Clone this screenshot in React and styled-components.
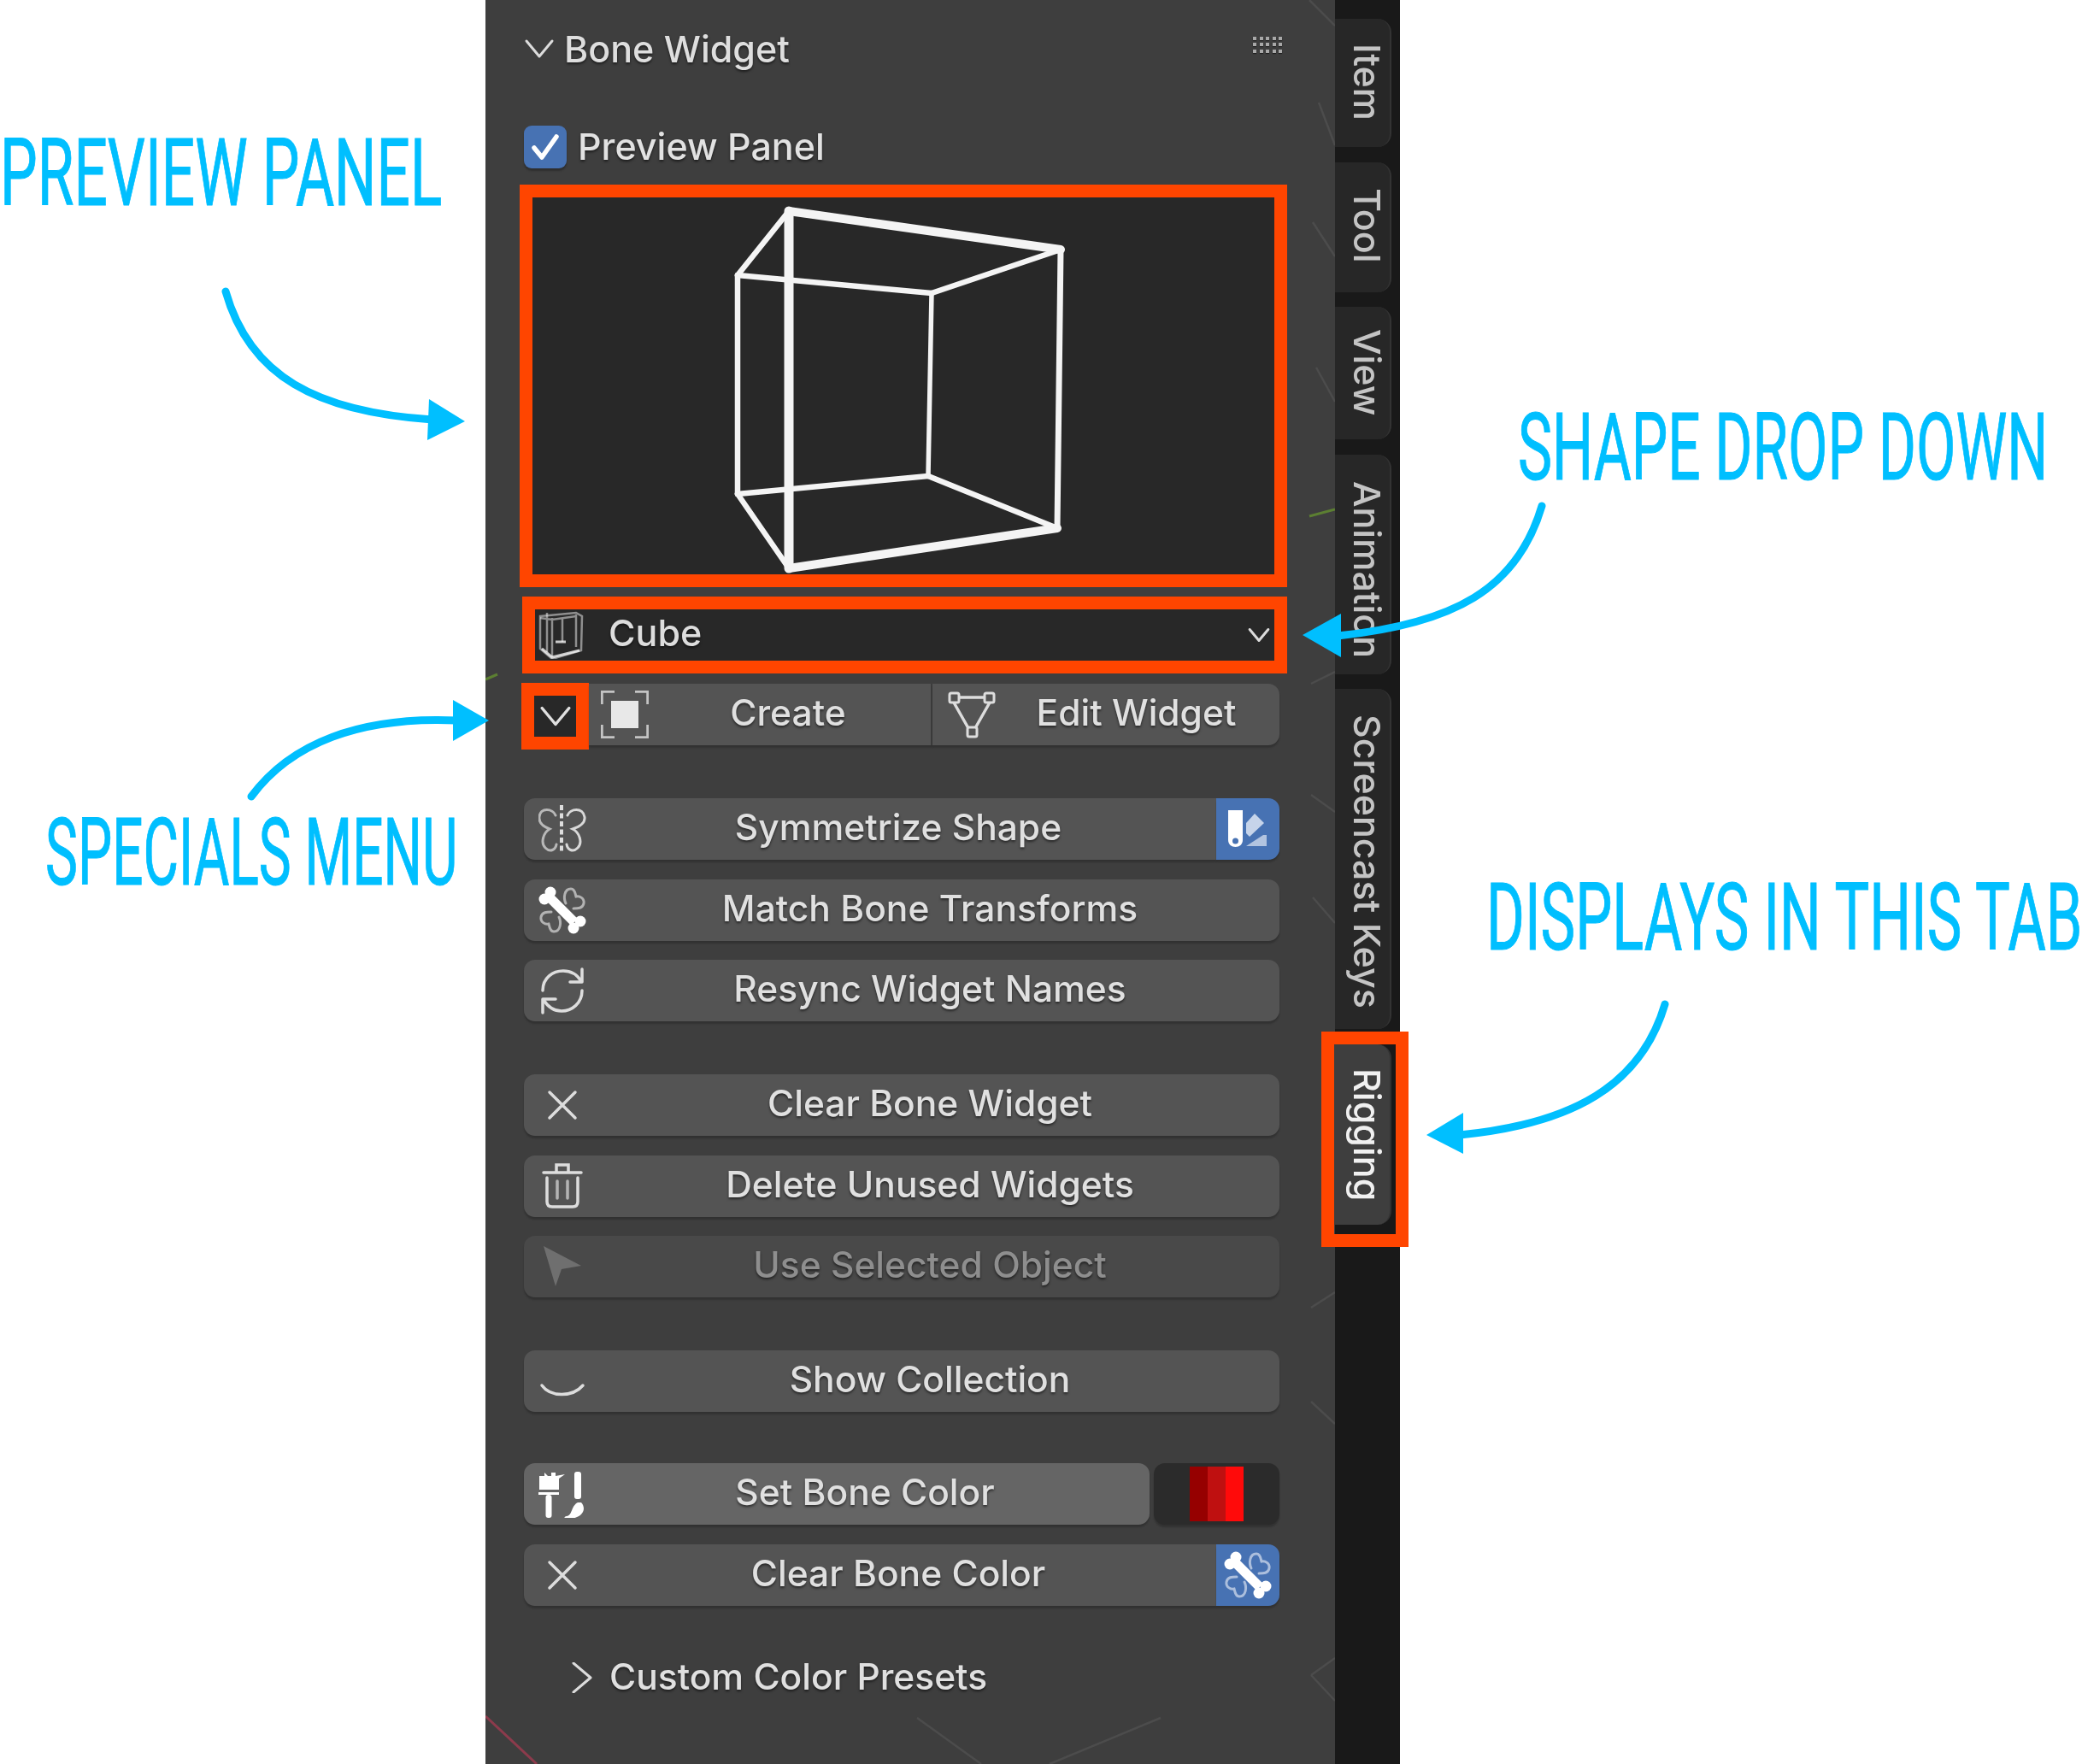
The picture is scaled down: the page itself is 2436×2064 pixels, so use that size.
import styled, { createGlobalStyle } from "styled-components";

const GlobalStyle = createGlobalStyle`
  html, body {
    margin: 0;
    padding: 0;
    background: #ffffff;
  }
`;

const Styled = {
  Page: styled.div`
    position: relative;
    width: 2436px;
    height: 2064px;
    overflow: hidden;
    background: #ffffff;
    font-family: "Inter", "Liberation Sans", sans-serif;
  `,

  Panel: styled.div`
    display: flex;
    margin-left: 568px;
    width: 1070px;
    height: 2064px;
    filter: blur(0.6px);
  `,

  Content: styled.div`
    position: relative;
    box-sizing: border-box;
    width: 994px;
    height: 100%;
    padding-left: 45px;
    background: #3e3e3e;
  `,

  Column: styled.div`
    position: relative;
    display: flex;
    flex-direction: column;
    width: 884px;
  `,

  Header: styled.div`
    display: flex;
    align-items: center;
    height: 114px;
    font-size: 43px;
    font-weight: 500;
    color: #dedede;
    text-shadow: 0 2px 3px rgba(0, 0, 0, 0.55);

    svg {
      margin-right: 11px;
    }

    span {
      flex: 1;
    }
  `,

  Grip: styled.div`
    display: grid;
    grid-template-columns: repeat(5, 4px);
    gap: 3.5px;
    margin: 0 -3px 10px 0;

    i {
      width: 4px;
      height: 4px;
      background: #a8a8a8;
      box-shadow: 0 1px 1px #1c1c1c;
    }
  `,

  CheckRow: styled.div`
    display: flex;
    align-items: center;
    gap: 13px;
    margin-top: 33px;
    height: 50px;
    font-size: 43px;
    font-weight: 500;
    color: #e2e2e2;
    text-shadow: 0 2px 3px rgba(0, 0, 0, 0.55);

    span {
      margin-top: -3px;
    }
  `,

  CheckBox: styled.div`
    display: flex;
    align-items: center;
    justify-content: center;
    width: 50px;
    height: 50px;
    border-radius: 9px;
    background: #4772b3;
    box-shadow: 0 3px 2px rgba(0, 0, 0, 0.25);
  `,

  Preview: styled.div`
    box-sizing: border-box;
    margin: 19px -9px 0 -5px;
    height: 471px;
    border: 15px solid #ff4500;
    background: #282828;

    svg {
      display: block;
    }
  `,

  Dropdown: styled.div`
    display: flex;
    align-items: center;
    box-sizing: border-box;
    margin: 11px -9px 0 -2px;
    height: 90px;
    padding-left: 2px;
    border: 15px solid #ff4500;
    background: #282828;
    font-size: 43px;
    font-weight: 500;
    color: #dddddd;
    text-shadow: 0 2px 3px rgba(0, 0, 0, 0.55);

    span {
      flex: 1;
      margin: -7px 0 0 28px;
    }

    svg:last-child {
      margin-right: 5px;
    }
  `,

  ActionRow: styled.div`
    display: flex;
    margin-top: 12px;
    height: 72px;
  `,

  SpecialsBox: styled.div`
    display: flex;
    flex: none;
    align-items: center;
    justify-content: center;
    box-sizing: border-box;
    margin: -1px 0 -5px -3px;
    width: 79px;
    height: 78px;
    border: 15px solid #ff4500;
    background: #282828;
  `,

  Group: styled.div`
    display: grid;
    gap: 22.7px;
    margin-top: ${({ $top }) => $top}px;
  `,

  SplitRow: styled.div`
    display: flex;
    gap: ${({ $gap }) => $gap || 0}px;
    height: 72px;
  `,

  Button: styled.div`
    display: flex;
    flex: ${({ $width }) => ($width ? `0 0 ${$width}px` : 1)};
    align-items: center;
    box-sizing: border-box;
    height: 72px;
    padding-left: ${({ $pad }) => $pad ?? 17}px;
    border-radius: ${({ $radius }) => $radius || "13px"};
    border-right: ${({ $divider }) => ($divider ? "2px solid #3c3c3c" : "none")};
    background: ${({ $tone }) =>
      $tone === "light" ? "#656565" : $tone === "off" ? "#494949" : "#545454"};
    box-shadow: 0 3px 2px rgba(0, 0, 0, 0.2);
    font-size: 42.5px;
    font-weight: 500;
    color: ${({ $tone }) => ($tone === "off" ? "#8e8e8e" : "#e0e0e0")};
    text-shadow: 0 2px 3px rgba(0, 0, 0, 0.55);

    svg {
      flex: none;
    }
  `,

  Label: styled.span`
    flex: 1;
    margin: -5px 0 0 ${({ $shift }) => $shift ?? -7}px;
    text-align: center;
    white-space: nowrap;
  `,

  IconCap: styled.div`
    display: flex;
    flex: none;
    align-items: center;
    justify-content: center;
    width: 74px;
    height: 72px;
    border-radius: 0 13px 13px 0;
    background: #4772b3;
    box-shadow: 0 3px 2px rgba(0, 0, 0, 0.2);
  `,

  Swatch: styled.div`
    display: flex;
    flex: 1;
    justify-content: center;
    align-items: center;
    height: 72px;
    border-radius: 13px;
    background: #2b2b2b;
    box-shadow: 0 3px 2px rgba(0, 0, 0, 0.2);
  `,

  Stripe: styled.div`
    width: 21px;
    height: 64px;
    background: ${({ $color }) => $color};
  `,

  Presets: styled.div`
    display: flex;
    align-items: center;
    gap: 14px;
    margin: 60px 0 0 50px;
    height: 48px;
    font-size: 42.5px;
    font-weight: 500;
    color: #e0e0e0;
    text-shadow: 0 2px 3px rgba(0, 0, 0, 0.55);

    span {
      margin-top: -3px;
    }
  `,

  Streaks: styled.svg`
    position: absolute;
    left: 0;
    top: 0;
  `,

  TabBar: styled.div`
    position: relative;
    display: flex;
    flex: 1;
    flex-direction: column;
    gap: 17.5px;
    box-sizing: border-box;
    padding-top: 22px;
    background: #191919;
  `,

  Tab: styled.div`
    box-sizing: border-box;
    flex: none;
    width: 66px;
    height: ${({ $height }) => $height}px;
    padding-top: ${({ $pad }) => $pad}px;
    border-radius: 0 16px 16px 0;
    border-right: 2px solid #333333;
    background: ${({ $active }) => ($active ? "#3e3e3e" : "#272727")};
    color: ${({ $active }) => ($active ? "#f0f0f0" : "#c4c4c4")};
    font-size: 43px;
    font-weight: 500;
    line-height: 52px;
    white-space: nowrap;
    writing-mode: vertical-rl;
  `,

  TabMark: styled.div`
    position: absolute;
    left: -16px;
    top: 1207px;
    box-sizing: border-box;
    width: 102px;
    height: 252px;
    border: 15px solid #ff4500;
  `,

  Callout: styled.div`
    position: absolute;
    left: ${({ $x }) => $x}px;
    top: ${({ $y }) => $y}px;
    font-family: "Roboto", "Liberation Sans", sans-serif;
    font-size: 110px;
    font-weight: 400;
    line-height: 110px;
    white-space: nowrap;
    color: #00bfff;
    -webkit-text-stroke: 1px #00bfff;
    transform: scaleX(${({ $squeeze }) => $squeeze});
    transform-origin: left top;
  `,

  ArrowLayer: styled.svg`
    position: absolute;
    left: 0;
    top: 0;
    pointer-events: none;
  `,
};

const INK = "#dcdcdc";

function Chevron({ dir = "down", size = 36, color = INK, weight = 3 }) {
  const d = dir === "down" ? "M3 9 L18 27 L33 9" : "M8 1 L28 18 L8 35";
  return (
    <svg width={size} height={size} viewBox="0 0 36 36">
      <path d={d} fill="none" stroke={color} strokeWidth={weight * (36 / size)} strokeLinecap="round" strokeLinejoin="round" />
    </svg>
  );
}

function Icon({ children }) {
  return (
    <svg width="56" height="56" viewBox="0 0 56 56" fill="none">
      {children}
    </svg>
  );
}

const BoneIcon = () => (
  <Icon>
    <path d="M12 12 L42 42" stroke="#ffffff" strokeWidth="11" />
    <circle cx="14" cy="7" r="6.5" fill="#ffffff" />
    <circle cx="7" cy="15" r="6.5" fill="#ffffff" />
    <circle cx="41" cy="49" r="6.5" fill="#ffffff" />
    <circle cx="49" cy="41" r="6.5" fill="#ffffff" />
    <path
      d="M32 20 C29 14 30 3 38 3 C43 3 43 9 44 12 C48 11 54 14 53 20 C52 26 46 26 41 26"
      stroke="#ffffff"
      strokeOpacity="0.55"
      strokeWidth="3"
      strokeLinecap="round"
    />
    <path
      d="M24 36 C27 42 26 53 18 53 C13 53 13 47 12 44 C8 45 2 42 3 36 C4 30 10 30 15 30"
      stroke="#ffffff"
      strokeOpacity="0.55"
      strokeWidth="3"
      strokeLinecap="round"
    />
  </Icon>
);

const CubeMini = () => (
  <Icon>
    <g stroke="#e4e4e4" strokeOpacity="0.55" strokeWidth="2.5">
      <path d="M4 6 L46 2 L53 6 L52 46 L18 56 L4 44 Z" />
      <path d="M12 2 L12 48 M18 8 L18 54 M30 8 L30 36 M46 4 L46 42 M4 8 L18 10 L46 6" />
    </g>
    <path d="M6 44 L18 54 L50 46 M22 36 L34 36" stroke="#ffffff" strokeOpacity="0.75" strokeWidth="3" />
  </Icon>
);

const CreateIcon = () => (
  <Icon>
    <rect x="12" y="12" width="32" height="32" fill="#e8e8e8" />
    <path
      d="M1 16 L1 1 L16 1 M40 1 L55 1 L55 16 M1 40 L1 55 L16 55 M55 40 L55 55 L40 55"
      stroke="#c4c4c4"
      strokeWidth="3.5"
    />
  </Icon>
);

const EditIcon = () => (
  <Icon>
    <path d="M13 8 L43 8 M7 14 L24 44 M49 14 L32 44" stroke="#dddddd" strokeWidth="3.5" />
    <rect x="2" y="3" width="11" height="11" rx="2" stroke="#dddddd" strokeWidth="3" />
    <rect x="43" y="3" width="11" height="11" rx="2" stroke="#dddddd" strokeWidth="3" />
    <rect x="23" y="43" width="11" height="11" rx="2" stroke="#dddddd" strokeWidth="3" />
  </Icon>
);

const ButterflyIcon = () => (
  <Icon>
    <path d="M27 0 L27 56" stroke="#dddddd" strokeWidth="4" strokeDasharray="6 3.5" />
    <path
      d="M34 12 C37 4 52 2 54 14 C55 22 46 26 40 28 C48 32 52 44 46 50 C40 56 34 52 33 46"
      stroke="#d8d8d8"
      strokeWidth="3"
      strokeLinecap="round"
    />
    <path
      d="M20 12 C17 4 2 2 1 14 C0 22 8 26 13 28 C6 32 2 44 8 50 C14 56 20 52 21 46"
      stroke="#b8b8b8"
      strokeWidth="3"
      strokeLinecap="round"
    />
  </Icon>
);

const RefreshIcon = () => (
  <Icon>
    <g stroke="#dddddd" strokeWidth="3.5" strokeLinecap="round" strokeLinejoin="round">
      <path d="M5 28 C5 13 17 5 29 5 C38 5 45 9 50 17" />
      <path d="M51 3 L51 18 L37 18" />
      <path d="M51 28 C51 43 39 52 27 52 C18 52 11 47 6 39" />
      <path d="M5 54 L5 38 L20 38" />
    </g>
  </Icon>
);

const CrossIcon = () => (
  <Icon>
    <path d="M13 13 L43 43 M43 13 L13 43" stroke="#dddddd" strokeWidth="3.5" strokeLinecap="round" />
  </Icon>
);

const TrashIcon = () => (
  <Icon>
    <g stroke="#dddddd" strokeWidth="3.5" strokeLinecap="round">
      <path d="M6 12 L50 12 M21 11 L21 3 L35 3 L35 11" />
      <path d="M10 18 L10 46 C10 50 12 52 16 52 L40 52 C44 52 46 50 46 46 L46 18" />
      <path d="M22 22 L22 42 M34 22 L34 42" strokeOpacity="0.7" />
    </g>
  </Icon>
);

const CursorIcon = () => (
  <Icon>
    <path d="M6 4 L50 27 L27 31 L20 51 Z" fill="#6f6f6f" />
  </Icon>
);

const ArcIcon = () => (
  <Icon>
    <path d="M4 33 C14 47 40 47 52 33" stroke="#dddddd" strokeWidth="3.5" strokeLinecap="round" />
  </Icon>
);

const BrushIcon = () => (
  <Icon>
    <path
      d="M1 7 L7 7 L7 3 L11 7 L15 7 L15 3 L20 3 L20 7 L31 5 L24 10 L24 23 L1 23 Z"
      fill="#ffffff"
    />
    <rect x="0" y="26" width="24" height="3" fill="#ffffff" />
    <rect x="8.5" y="29" width="7" height="27" rx="3" fill="#ffffff" />
    <rect x="42" y="2" width="8" height="32" rx="3" fill="#ffffff" />
    <path d="M50 38 C56 44 54 57 34 57 C30 57 29 55 33 54 C40 53 38 42 46 38 Z" fill="#ffffff" />
  </Icon>
);

const PaletteIcon = () => (
  <Icon>
    <path d="M5 6 L22 6 L22 41 C22 46 18 49 13.5 49 C9 49 5 46 5 41 Z" fill="#ffffff" />
    <circle cx="13.5" cy="42" r="3.5" fill="#4772b3" />
    <path d="M26 21 L36 10 L47 21 L30 37 L26 33 Z" fill="#c6d4ea" />
    <path d="M26 48 L46 35 L50 35 L50 48 Z" fill="#b2c4e0" />
  </Icon>
);

function WireCube() {
  const p = {
    a: [300, 16],
    b: [618, 61],
    c: [467, 112],
    d: [240, 91],
    e: [240, 347],
    f: [463, 326],
    g: [614, 387],
    h: [300, 434],
  };
  const edges = [
    ["a", "b", 10],
    ["a", "h", 11],
    ["h", "g", 10],
    ["b", "g", 7],
    ["d", "e", 6.5],
    ["d", "a", 6.5],
    ["d", "c", 6.5],
    ["c", "b", 6.5],
    ["c", "f", 5.5],
    ["e", "f", 6.5],
    ["f", "g", 6.5],
    ["e", "h", 6.5],
  ];
  return (
    <svg width="868" height="441" viewBox="0 0 868 441">
      {edges.map(([from, to, w]) => (
        <line
          key={from + to}
          x1={p[from][0]}
          y1={p[from][1]}
          x2={p[to][0]}
          y2={p[to][1]}
          stroke="#f4f4f4"
          strokeWidth={w}
          strokeLinecap="round"
        />
      ))}
    </svg>
  );
}

function Streaks() {
  const lines = [
    "M964 0 L994 30",
    "M975 120 L994 170",
    "M968 260 L994 300",
    "M972 430 L994 470",
    "M966 800 L994 786",
    "M966 930 L994 950",
    "M968 1050 L994 1080",
    "M966 1530 L994 1512",
    "M966 1640 L994 1666",
    "M966 1960 L994 1940",
    "M994 1990 L966 1960",
    "M505 2010 L580 2064",
    "M790 2010 L660 2064",
  ];
  return (
    <Styled.Streaks width="994" height="2064" viewBox="0 0 994 2064" fill="none">
      {lines.map((d) => (
        <path key={d} d={d} stroke="#4c4c4c" strokeWidth="2.5" />
      ))}
      <path d="M964 604 L994 596" stroke="#5c7f32" strokeWidth="3" />
      <path d="M0 795 L14 789" stroke="#5c7f32" strokeWidth="3" />
      <path d="M0 2008 L60 2064" stroke="#8c3b4c" strokeWidth="3" />
    </Styled.Streaks>
  );
}

function Arrows() {
  const stroke = { stroke: "#00bfff", strokeWidth: 9, strokeLinecap: "round", fill: "none" };
  return (
    <Styled.ArrowLayer width="2436" height="2064" viewBox="0 0 2436 2064">
      <path d="M264 341 C292 440 370 482 506 491" {...stroke} />
      <path d="M544 493 L502 467 L500 515 Z" fill="#00bfff" />
      <path d="M1804 592 C1775 690 1700 730 1565 744" {...stroke} />
      <path d="M1524 743 L1569 718 L1569 769 Z" fill="#00bfff" />
      <path d="M294 932 C340 870 420 838 535 843" {...stroke} />
      <path d="M572 843 L530 819 L530 867 Z" fill="#00bfff" />
      <path d="M1948 1175 C1920 1270 1840 1315 1708 1328" {...stroke} />
      <path d="M1669 1328 L1712 1302 L1712 1350 Z" fill="#00bfff" />
    </Styled.ArrowLayer>
  );
}

const TABS = [
  { name: "Item", height: 150, pad: 29 },
  { name: "Tool", height: 152, pad: 30 },
  { name: "View", height: 155, pad: 26 },
  { name: "Animation", height: 257, pad: 31 },
  { name: "Screencast Keys", height: 398, pad: 30 },
];

function App() {
  return (
    <Styled.Page>
      <GlobalStyle />
      <Styled.Panel>
        <Styled.Content>
          <Streaks />
          <Styled.Column>
            <Styled.Header>
              <Chevron />
              <span>Bone Widget</span>
              <Styled.Grip>
                {Array.from({ length: 15 }, (_, i) => (
                  <i key={i} />
                ))}
              </Styled.Grip>
            </Styled.Header>

            <Styled.CheckRow>
              <Styled.CheckBox>
                <svg width="36" height="36" viewBox="0 0 36 36">
                  <path d="M5 19 L14 30 L31 6" fill="none" stroke="#ffffff" strokeWidth="5.5" strokeLinecap="round" strokeLinejoin="round" />
                </svg>
              </Styled.CheckBox>
              <span>Preview Panel</span>
            </Styled.CheckRow>

            <Styled.Preview>
              <WireCube />
            </Styled.Preview>

            <Styled.Dropdown>
              <CubeMini />
              <span>Cube</span>
              <Chevron size={26} weight={3} />
            </Styled.Dropdown>

            <Styled.ActionRow>
              <Styled.SpecialsBox>
                <Chevron size={38} color="#e0e0e0" weight={3.5} />
              </Styled.SpecialsBox>
              <Styled.Button $width={402} $pad={14} $radius="0" $divider>
                <CreateIcon />
                <Styled.Label $shift={-4}>Create</Styled.Label>
              </Styled.Button>
              <Styled.Button $pad={18} $radius="0 13px 13px 0">
                <EditIcon />
                <Styled.Label $shift={-3}>Edit Widget</Styled.Label>
              </Styled.Button>
            </Styled.ActionRow>

            <Styled.Group $top={62}>
              <Styled.SplitRow>
                <Styled.Button $radius="13px 0 0 13px">
                  <ButterflyIcon />
                  <Styled.Label>Symmetrize Shape</Styled.Label>
                </Styled.Button>
                <Styled.IconCap>
                  <PaletteIcon />
                </Styled.IconCap>
              </Styled.SplitRow>
              <Styled.Button>
                <BoneIcon />
                <Styled.Label>Match Bone Transforms</Styled.Label>
              </Styled.Button>
              <Styled.Button>
                <RefreshIcon />
                <Styled.Label>Resync Widget Names</Styled.Label>
              </Styled.Button>
            </Styled.Group>

            <Styled.Group $top={61.6}>
              <Styled.Button>
                <CrossIcon />
                <Styled.Label>Clear Bone Widget</Styled.Label>
              </Styled.Button>
              <Styled.Button>
                <TrashIcon />
                <Styled.Label>Delete Unused Widgets</Styled.Label>
              </Styled.Button>
              <Styled.Button $tone="off">
                <CursorIcon />
                <Styled.Label>Use Selected Object</Styled.Label>
              </Styled.Button>
            </Styled.Group>

            <Styled.Group $top={61.6}>
              <Styled.Button>
                <ArcIcon />
                <Styled.Label>Show Collection</Styled.Label>
              </Styled.Button>
            </Styled.Group>

            <Styled.Group $top={60}>
              <Styled.SplitRow $gap={5}>
                <Styled.Button $width={732} $tone="light">
                  <BrushIcon />
                  <Styled.Label>Set Bone Color</Styled.Label>
                </Styled.Button>
                <Styled.Swatch>
                  <Styled.Stripe $color="#960000" />
                  <Styled.Stripe $color="#bf1010" />
                  <Styled.Stripe $color="#ff0a0a" />
                </Styled.Swatch>
              </Styled.SplitRow>
              <Styled.SplitRow>
                <Styled.Button $radius="13px 0 0 13px">
                  <CrossIcon />
                  <Styled.Label>Clear Bone Color</Styled.Label>
                </Styled.Button>
                <Styled.IconCap>
                  <BoneIcon />
                </Styled.IconCap>
              </Styled.SplitRow>
            </Styled.Group>

            <Styled.Presets>
              <Chevron dir="right" />
              <span>Custom Color Presets</span>
            </Styled.Presets>
          </Styled.Column>
        </Styled.Content>

        <Styled.TabBar>
          {TABS.map((tab) => (
            <Styled.Tab key={tab.name} $height={tab.height} $pad={tab.pad}>
              {tab.name}
            </Styled.Tab>
          ))}
          <Styled.Tab $active $height={211} $pad={28}>
            Rigging
          </Styled.Tab>
          <Styled.TabMark />
        </Styled.TabBar>
      </Styled.Panel>

      <Styled.Callout $x={0} $y={148} $squeeze={0.63}>PREVIEW PANEL</Styled.Callout>
      <Styled.Callout $x={1776} $y={469} $squeeze={0.613}>SHAPE DROP DOWN</Styled.Callout>
      <Styled.Callout $x={53} $y={943} $squeeze={0.58}>SPECIALS MENU</Styled.Callout>
      <Styled.Callout $x={1739} $y={1019} $squeeze={0.622}>DISPLAYS IN THIS TAB</Styled.Callout>
      <Arrows />
    </Styled.Page>
  );
}

export default App;
